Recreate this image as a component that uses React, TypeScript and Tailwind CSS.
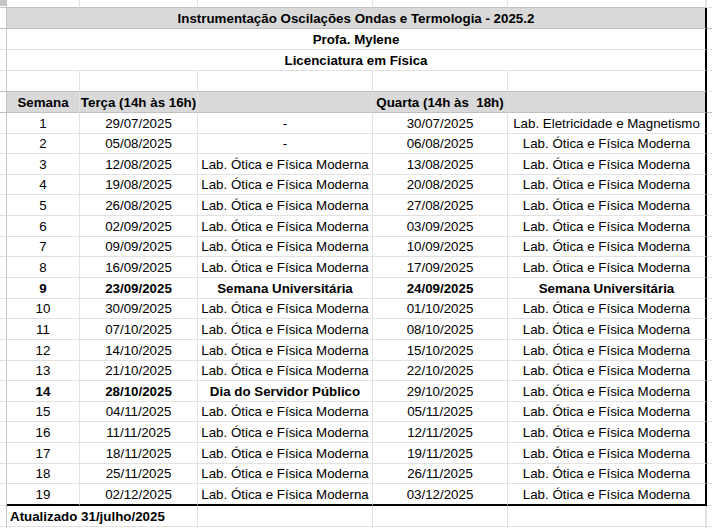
import React from "react";

const LAB = "Lab. Ótica e Física Moderna";

type Row = { cells: string[]; bold: number };

const rows: Row[] = [
  { cells: ["1", "29/07/2025", "-", "30/07/2025", "Lab. Eletricidade e Magnetismo"], bold: 0 },
  { cells: ["2", "05/08/2025", "-", "06/08/2025", LAB], bold: 0 },
  { cells: ["3", "12/08/2025", LAB, "13/08/2025", LAB], bold: 0 },
  { cells: ["4", "19/08/2025", LAB, "20/08/2025", LAB], bold: 0 },
  { cells: ["5", "26/08/2025", LAB, "27/08/2025", LAB], bold: 0 },
  { cells: ["6", "02/09/2025", LAB, "03/09/2025", LAB], bold: 0 },
  { cells: ["7", "09/09/2025", LAB, "10/09/2025", LAB], bold: 0 },
  { cells: ["8", "16/09/2025", LAB, "17/09/2025", LAB], bold: 0 },
  { cells: ["9", "23/09/2025", "Semana Universitária", "24/09/2025", "Semana Universitária"], bold: 5 },
  { cells: ["10", "30/09/2025", LAB, "01/10/2025", LAB], bold: 0 },
  { cells: ["11", "07/10/2025", LAB, "08/10/2025", LAB], bold: 0 },
  { cells: ["12", "14/10/2025", LAB, "15/10/2025", LAB], bold: 0 },
  { cells: ["13", "21/10/2025", LAB, "22/10/2025", LAB], bold: 0 },
  { cells: ["14", "28/10/2025", "Dia do Servidor Público", "29/10/2025", LAB], bold: 3 },
  { cells: ["15", "04/11/2025", LAB, "05/11/2025", LAB], bold: 0 },
  { cells: ["16", "11/11/2025", LAB, "12/11/2025", LAB], bold: 0 },
  { cells: ["17", "18/11/2025", LAB, "19/11/2025", LAB], bold: 0 },
  { cells: ["18", "25/11/2025", LAB, "26/11/2025", LAB], bold: 0 },
  { cells: ["19", "02/12/2025", LAB, "03/12/2025", LAB], bold: 0 },
];

// row heights (incl. bottom gridline) so the 19 rows land on the sheet's lines
const tall = [true, false, true, false, true, true, false, true, true, false, true, true, false, true, false, true, true, false, true];

const widths = ["w-[73px]", "w-[118px]", "w-[175px]", "w-[135px]", "w-[199px]"];

const cell = "flex items-center justify-center whitespace-nowrap border-b border-r border-[#e2e2e2] pt-px";

const Edge = ({ h, dark }: { h: string; dark?: boolean }) => (
  <div className={`w-[7px] shrink-0 border-r border-b border-r-[#c6c6c6] ${dark ? "border-b-[#c0c0c0]" : "border-b-[#e2e2e2]"} ${h}`} />
);

const Tail = ({ h, dark }: { h: string; dark?: boolean }) => (
  <div className={`flex-1 border-b ${dark ? "border-[#c0c0c0]" : "border-[#e2e2e2]"} ${h}`} />
);

const MergedRow = ({ text, gray }: { text: string; gray?: boolean }) => (
  <div className="flex">
    <Edge h="h-[21px]" dark={gray} />
    <div
      className={`w-[700px] h-[21px] flex items-center justify-center font-bold border-b border-r-2 border-r-black pt-px ${
        gray ? "bg-[#d9d9d9] border-b-[#c0c0c0]" : "border-b-[#e2e2e2]"
      }`}
    >
      {text}
    </div>
    <Tail h="h-[21px]" dark={gray} />
  </div>
);

export default function App() {
  return (
    <div className="w-[712px] h-[528px] overflow-hidden bg-white text-black font-['Liberation_Sans',Arial,sans-serif] text-[13.33px] leading-none">
      {/* top strip of the sheet */}
      <div className="flex h-[8px]">
        <div className="w-[7px] shrink-0 border-r border-b border-[#c6c6c6] relative">
          <div className="absolute left-0 top-0 w-[6px] h-[6px] bg-[#c4c4c4]" />
        </div>
        <div className="w-[73px] border-r border-b border-r-[#e2e2e2] border-b-[#c0c0c0]" />
        <div className="w-[118px] border-r border-b border-r-[#e2e2e2] border-b-[#c0c0c0]" />
        <div className="w-[175px] border-r border-b border-r-[#e2e2e2] border-b-[#c0c0c0]" />
        <div className="w-[135px] border-r border-b border-r-[#e2e2e2] border-b-[#c0c0c0]" />
        <div className="w-[199px] border-r-2 border-b border-r-[#e2e2e2] border-b-[#c0c0c0]" />
        <Tail h="h-[8px]" />
      </div>

      <MergedRow text="Instrumentação Oscilações Ondas e Termologia - 2025.2" gray />
      <MergedRow text="Profa. Mylene" />
      <MergedRow text="Licenciatura em Física" />

      {/* blank row */}
      <div className="flex">
        <Edge h="h-[21px]" dark />
        {widths.map((w, i) => (
          <div
            key={i}
            className={`${w} h-[21px] border-b border-b-[#c0c0c0] ${i === 4 ? "border-r-2 border-r-black" : "border-r border-r-[#e2e2e2]"}`}
          />
        ))}
        <Tail h="h-[21px]" />
      </div>

      {/* header */}
      <div className="flex">
        <Edge h="h-[21px]" dark />
        <div className="w-[73px] h-[21px] flex items-center justify-center font-bold bg-[#d9d9d9] border-b border-r border-b-[#c0c0c0] border-r-[#e2e2e2] pt-px">
          Semana
        </div>
        <div className="w-[118px] h-[21px] flex items-center justify-center font-bold bg-[#d9d9d9] border-b border-r border-b-[#c0c0c0] border-r-[#e2e2e2] pt-px whitespace-nowrap">
          Terça (14h às 16h)
        </div>
        <div className="w-[175px] h-[21px] bg-[#d9d9d9] border-b border-r border-b-[#c0c0c0] border-r-[#e2e2e2]" />
        <div className="w-[135px] h-[21px] flex items-center justify-center font-bold bg-[#d9d9d9] border-b border-r border-b-[#c0c0c0] border-r-[#e2e2e2] pt-px whitespace-pre">
          Quarta (14h às  18h)
        </div>
        <div className="w-[199px] h-[21px] bg-[#d9d9d9] border-b border-r-2 border-b-[#c0c0c0] border-r-black" />
        <Tail h="h-[21px]" dark />
      </div>

      {/* data rows */}
      {rows.map((r, ri) => {
        const last = ri === rows.length - 1;
        const h = last ? "h-[22px]" : tall[ri] ? "h-[21px]" : "h-[20px]";
        return (
          <div key={ri} className="flex">
            <Edge h={h} />
            {r.cells.map((c, ci) => (
              <div
                key={ci}
                className={`${cell} ${widths[ci]} ${h} ${ci < r.bold ? "font-bold" : ""} ${
                  ci === 4 ? "border-r-2 border-r-black" : ""
                } ${last ? "border-b-2 border-b-black" : ""}`}
              >
                {c}
              </div>
            ))}
            <Tail h={h} />
          </div>
        );
      })}

      {/* footer */}
      <div className="flex">
        <Edge h="h-[21px]" />
        <div className="w-[191px] h-[21px] flex items-center pl-[3px] font-bold whitespace-nowrap border-b border-r border-[#e2e2e2] pt-px">
          Atualizado 31/julho/2025
        </div>
        <div className="w-[175px] h-[21px] border-b border-r border-[#e2e2e2]" />
        <div className="w-[135px] h-[21px] border-b border-r border-[#e2e2e2]" />
        <div className="w-[199px] h-[21px] border-b border-r-2 border-[#e2e2e2]" />
        <Tail h="h-[21px]" />
      </div>
      <div className="flex h-[10px]">
        <div className="w-[7px] border-r border-[#c6c6c6]" />
        <div className="w-[73px] border-r border-[#e2e2e2]" />
        <div className="w-[118px] border-r border-[#e2e2e2]" />
        <div className="w-[175px] border-r border-[#e2e2e2]" />
        <div className="w-[135px] border-r border-[#e2e2e2]" />
        <div className="w-[199px] border-r-2 border-[#e2e2e2]" />
      </div>
    </div>
  );
}
